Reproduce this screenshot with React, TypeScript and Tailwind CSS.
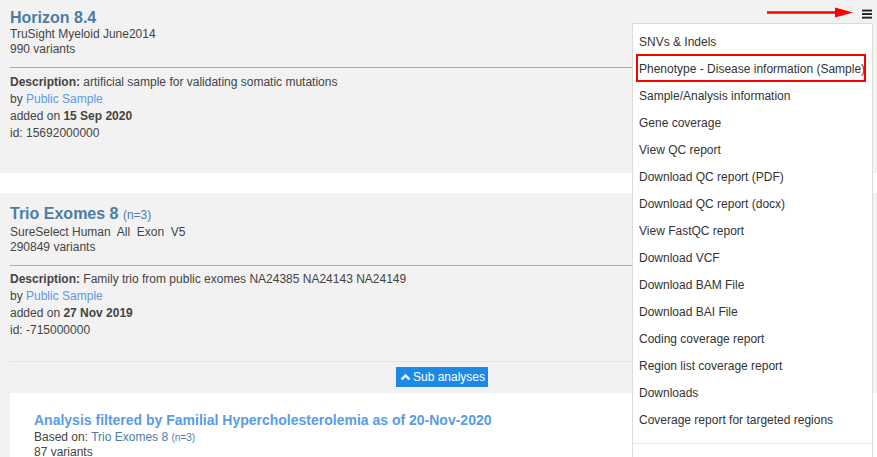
export default function App() {
  const items = [
    "SNVs & Indels",
    "Phenotype - Disease information (Sample)",
    "Sample/Analysis information",
    "Gene coverage",
    "View QC report",
    "Download QC report (PDF)",
    "Download QC report (docx)",
    "View FastQC report",
    "Download VCF",
    "Download BAM File",
    "Download BAI File",
    "Coding coverage report",
    "Region list coverage report",
    "Downloads",
    "Coverage report for targeted regions",
  ];
  return (
    <div className="relative w-[877px] h-[457px] overflow-hidden bg-white font-['Liberation_Sans',Arial,sans-serif] text-[12px] text-[#444]">
      <div className="-mt-[2px] flex flex-col">
        {/* Card 1 */}
        <div className="bg-[#f2f2f2] h-[175px] px-[10px] pt-[10px]">
          <div className="text-[16px] font-bold leading-[19px] text-[#4b7da6]">Horizon 8.4</div>
          <div className="leading-[15px]">TruSight Myeloid June2014</div>
          <div className="leading-[15px]">990 variants</div>
          <div className="mt-[10px] border-t border-[#aaa]" />
          <div className="mt-[6px] leading-[17px]">
            <div>
              <span className="font-bold">Description:</span> artificial sample for validating somatic mutations
            </div>
            <div>
              by <span className="text-[#5a9be6]">Public Sample</span>
            </div>
            <div>
              added on <span className="font-bold">15 Sep 2020</span>
            </div>
            <div>id: 15692000000</div>
          </div>
        </div>
        <div className="h-[20px]" />
        {/* Card 2 */}
        <div className="bg-[#f2f2f2] h-[270px] pt-[11px]">
          <div className="px-[10px]">
            <div className="text-[16px] font-bold leading-[19px] text-[#4b7da6]">
              Trio Exomes 8 <span className="text-[12px] font-normal">(n=3)</span>
            </div>
            <div className="leading-[15px] whitespace-pre">SureSelect Human  All  Exon  V5</div>
            <div className="leading-[15px]">290849 variants</div>
            <div className="mt-[10px] border-t border-[#aaa]" />
            <div className="mt-[5px] leading-[17px]">
              <div>
                <span className="font-bold">Description:</span> Family trio from public exomes NA24385 NA24143 NA24149
              </div>
              <div>
                by <span className="text-[#5a9be6]">Public Sample</span>
              </div>
              <div>
                added on <span className="font-bold">27 Nov 2019</span>
              </div>
              <div>id: -715000000</div>
            </div>
            <div className="mt-[22px] border-t border-[#e4e4e4]" />
          </div>
          <div className="mt-[5px] pl-[396px] flex">
            <div className="h-[20px] bg-[#1e88e5] text-white flex items-center pl-[4px] pr-[3px] gap-[2px] leading-[20px]">
              <svg width="11" height="8" viewBox="0 0 11 8">
                <polyline points="1.5,6.5 5.5,2.5 9.5,6.5" fill="none" stroke="white" strokeWidth="2.4" />
              </svg>
              <span>Sub analyses</span>
            </div>
          </div>
          <div className="mt-[6px] ml-[10px] bg-white h-[80px] pl-[24px] pt-[18px]">
            <div className="text-[14px] font-bold leading-[19px] text-[#5a9be6]">
              Analysis filtered by Familial Hypercholesterolemia as of 20-Nov-2020
            </div>
            <div className="leading-[15px]">
              Based on: <span className="text-[#4b7da6]">Trio Exomes 8</span>{" "}
              <span className="text-[#4b7da6] text-[10px]">(n=3)</span>
            </div>
            <div className="leading-[15px]">87 variants</div>
          </div>
        </div>
      </div>

      {/* Hamburger */}
      <svg className="absolute left-[861px] top-[9px]" width="12" height="11" viewBox="0 0 12 11">
        <rect x="1" y="0.6" width="10" height="1.9" fill="#222" />
        <rect x="1" y="4.1" width="10" height="1.9" fill="#222" />
        <rect x="1" y="7.7" width="10" height="1.9" fill="#222" />
      </svg>

      {/* Red arrow */}
      <svg className="absolute left-[765px] top-[6px]" width="90" height="14" viewBox="0 0 90 14">
        <line x1="2" y1="6.5" x2="74" y2="6.5" stroke="#ff0000" strokeWidth="2.4" />
        <polygon points="70,1.5 88,6.5 70,11.5" fill="#ff0000" />
      </svg>

      {/* Dropdown menu */}
      <div className="absolute left-[632px] top-[23px] w-[241px] h-[450px] bg-white border border-[#dcdcdc] pt-[5px] text-[#333]">
        {items.map((it) => (
          <div key={it} className="h-[27px] leading-[27px] pl-[6px] whitespace-nowrap">
            {it}
          </div>
        ))}
        <div className="mt-[9px] border-t border-[#e5e5e5]" />
      </div>

      {/* Red highlight box */}
      <div className="absolute left-[636px] top-[54px] w-[230px] h-[28px] border-2 border-[#ff0000]" />
    </div>
  );
}
